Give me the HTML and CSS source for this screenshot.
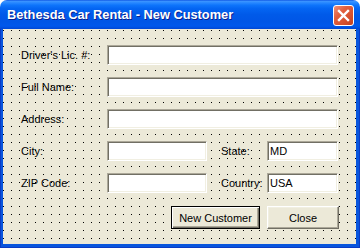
FILE: index.html
```html
<!DOCTYPE html>
<html lang="en">
<head>
    <meta charset="UTF-8">
    <meta name="viewport" content="width=device-width, initial-scale=1.0">
    <title>Bethesda Car Rental - New Customer</title>
    <link rel="stylesheet" href="styles.css">
</head>
<body>
    <div class="window">
        <!-- Title bar -->
        <div class="titlebar">
            <span class="title">Bethesda Car Rental - New Customer</span>
            <button class="close-btn" type="button" aria-label="Close">
                <svg width="13" height="13" viewBox="0 0 13 13">
                    <path d="M2 2 L11 11 M11 2 L2 11" stroke="#fff" stroke-width="2.4" stroke-linecap="square" fill="none"/>
                </svg>
            </button>
        </div>

        <div class="frame">
            <div class="client">
                <div class="row">
                    <label class="lbl">Driver's Lic. #:</label>
                    <input class="box box-wide" type="text" spellcheck="false">
                </div>
                <div class="row">
                    <label class="lbl">Full Name:</label>
                    <input class="box box-wide" type="text" spellcheck="false">
                </div>
                <div class="row">
                    <label class="lbl">Address:</label>
                    <input class="box box-wide" type="text" spellcheck="false">
                </div>
                <div class="row">
                    <label class="lbl">City:</label>
                    <input class="box box-city" type="text" spellcheck="false">
                    <label class="lbl lbl-side">State:</label>
                    <input class="box box-short" type="text" value="MD" spellcheck="false">
                </div>
                <div class="row">
                    <label class="lbl">ZIP Code:</label>
                    <input class="box box-city" type="text" spellcheck="false">
                    <label class="lbl lbl-side">Country:</label>
                    <input class="box box-short" type="text" value="USA" spellcheck="false">
                </div>

                <div class="buttons">
                    <button class="btn btn-default" type="button">New Customer</button>
                    <button class="btn btn-close" type="button">Close</button>
                </div>
            </div>
        </div>
    </div>
</body>
</html>
```

FILE: styles.css
```css
body {
    margin: 0;
    padding: 0;
    background: #fff;
    font-family: "Liberation Sans", Arial, sans-serif;
}

.window {
    width: 360px;
    height: 248px;
    display: flex;
    flex-direction: column;
}

/* Barre de titre XP */
.titlebar {
    height: 29px;
    flex: none;
    display: flex;
    align-items: flex-start;
    padding: 0 6px 0 7px;
    border-radius: 7px 7px 0 0;
    background: linear-gradient(to bottom,
        #0a4fe0 0%,
        #3d95ff 4%,
        #2a8aff 9%,
        #0e74fb 18%,
        #0465f2 30%,
        #005ae9 50%,
        #0056e6 75%,
        #0058ec 90%,
        #0047d4 100%);
}

.title {
    flex: 1;
    margin-top: 7px;
    color: #fff;
    font-weight: bold;
    font-size: 12.8px;
    line-height: 15px;
    text-shadow: 1px 1px #0b1f8c;
    white-space: nowrap;
}

.close-btn {
    width: 21px;
    height: 21px;
    margin: 5px 0 0 0;
    padding: 0;
    box-sizing: border-box;
    border: 1px solid #fff;
    border-radius: 3px;
    background: linear-gradient(135deg, #f0917a 0%, #e2603f 35%, #d6502e 70%, #c2401e 100%);
    display: flex;
    align-items: center;
    justify-content: center;
}

/* Cadre et zone client */
.frame {
    flex: 1;
    display: flex;
    padding: 0 4px 4px 3px;
    background: #0855dd;
    box-shadow: inset 1px 0 #0a3bc4, inset -1px -1px #0a3bc4;
}

.client {
    flex: 1;
    display: flex;
    flex-direction: column;
    gap: 12px;
    padding: 16px 0 0 18px;
    background:
        linear-gradient(90deg, #ece9d8 7px, transparent 7px),
        linear-gradient(#ece9d8 7px, transparent 7px),
        #000;
    background-size: 8px 8px;
    background-position: 1px 2px;
}

.row {
    display: flex;
    align-items: center;
    height: 20px;
}

.lbl {
    width: 86px;
    flex: none;
    font-size: 11px;
    color: #000;
}

.lbl-side {
    width: 46px;
    margin-left: 14px;
}

.box {
    box-sizing: border-box;
    height: 20px;
    margin: 0;
    padding: 0 2px;
    border: 1px solid;
    border-color: #aca899 #fff #fff #aca899;
    box-shadow: inset 1px 1px #716f64, inset -1px -1px #f1efe2;
    background: #fff;
    font-family: "Liberation Sans", Arial, sans-serif;
    font-size: 11px;
    color: #000;
    outline: none;
}

.box-wide {
    width: 231px;
}

.box-city {
    width: 100px;
}

.box-short {
    width: 71px;
}

/* Boutons */
.buttons {
    display: flex;
    gap: 7px;
    margin: 1px 0 0 150px;
}

.btn {
    height: 23px;
    padding: 0;
    box-sizing: border-box;
    background: #ece9d8;
    border: 1px solid;
    border-color: #fff #716f64 #716f64 #fff;
    box-shadow: inset -1px -1px #aca899, inset 1px 1px #f1efe2;
    font-family: "Liberation Sans", Arial, sans-serif;
    font-size: 11px;
    color: #000;
}

.btn-default {
    width: 89px;
    border-color: #000;
    box-shadow: inset 1px 1px #fff, inset -1px -1px #716f64, inset -2px -2px #aca899;
}

.btn-close {
    width: 72px;
}
```
